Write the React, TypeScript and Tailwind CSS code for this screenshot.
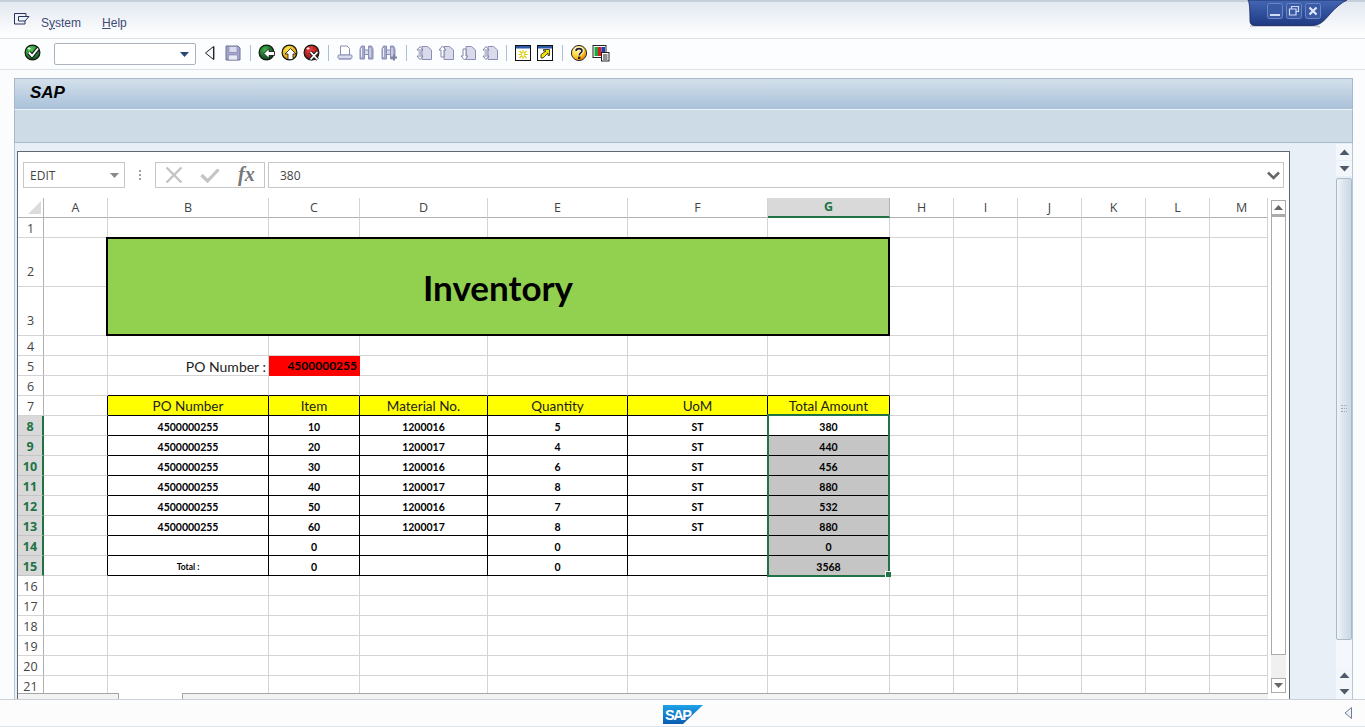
import React from "react";

const OUT = "#8a8fb5";
const FILL = "#d9dbeb";

function Ball({ id, c1, c2, children }: { id: string; c1: string; c2: string; children: React.ReactNode }) {
  return (
    <svg width="18" height="18" viewBox="0 0 18 18">
      <defs>
        <radialGradient id={id} cx="40%" cy="30%" r="75%">
          <stop offset="0" stopColor={c1} />
          <stop offset="1" stopColor={c2} />
        </radialGradient>
      </defs>
      <circle cx="8.5" cy="8.5" r="7.4" fill={`url(#${id})`} stroke="#101a10" strokeWidth="1.2" />
      {children}
    </svg>
  );
}

const CheckIcon = () => (
  <Ball id="g1" c1="#58c858" c2="#0c5a20">
    <path d="M5 8.5 L8 12 L14 4.5" fill="none" stroke="#111" strokeWidth="4" />
    <path d="M5 8.5 L8 12 L14 4.5" fill="none" stroke="#fff" strokeWidth="2" />
    <path d="M5 3 V6 M3.5 4.5 H6.5" stroke="#d8f5d8" strokeWidth="1" />
  </Ball>
);
const BackIcon = () => (
  <Ball id="g2" c1="#3fb04a" c2="#063d18">
    <path d="M6 9.5 L11 4.5 V7.5 H16.5 V11.5 H11 V14.5 Z" fill="#fff" stroke="#111" strokeWidth="0.8" />
  </Ball>
);
const UpIcon = () => (
  <Ball id="g3" c1="#ffe84a" c2="#d98a00">
    <path d="M9.5 4.5 L15 10 H12 V15.5 H7 V10 H4 Z" fill="#fff" stroke="#111" strokeWidth="0.8" />
  </Ball>
);
const CancelIcon = () => (
  <Ball id="g4" c1="#f04040" c2="#7c0c0c">
    <path d="M7.5 8 L14.5 15.5 M14.5 8 L7.5 15.5" stroke="#222" strokeWidth="3.6" />
    <path d="M7.5 8 L14.5 15.5 M14.5 8 L7.5 15.5" stroke="#fff" strokeWidth="1.8" />
    <path d="M5 3 V6 M3.5 4.5 H6.5" stroke="#ffe0e0" strokeWidth="1" />
  </Ball>
);
const PrevIcon = () => (
  <svg width="12" height="16" viewBox="0 0 12 16">
    <path d="M9.5 1.5 V14.5 L1.5 8 Z" fill="#f4f6f9" stroke="#222" strokeWidth="1" />
    <path d="M10.5 1.5 V14.5" stroke="#9aa5b5" strokeWidth="1" />
  </svg>
);
const SaveIcon = () => (
  <svg width="16" height="16" viewBox="0 0 16 16">
    <path d="M1 1 H13 L15 3 V15 H1 Z" fill="#a3a5cb" stroke="#6e7199" />
    <rect x="4" y="1.5" width="8" height="6" fill="#d9dbeb" stroke="#7c7fa8" strokeWidth="0.6" />
    <rect x="3.5" y="10" width="9" height="5" fill="#e8e9f2" stroke="#7c7fa8" strokeWidth="0.6" />
  </svg>
);
const PrintIcon = () => (
  <svg width="16" height="16" viewBox="0 0 16 16">
    <path d="M3.5 1 H10 L12.5 3.5 V10 H3.5 Z" fill="#fff" stroke={OUT} />
    <rect x="1" y="10" width="14" height="3.5" rx="1" fill={FILL} stroke={OUT} />
    <rect x="2" y="13.5" width="12" height="1.5" fill="#aeb1cf" />
  </svg>
);
const FindIcon = ({ plus }: { plus?: boolean }) => (
  <svg width="17" height="16" viewBox="0 0 17 16">
    <path d="M1 14 V4 L2.5 1 H5.5 V14 Z M9.5 14 V1 H12.5 L14 4 V14 Z" fill="#a4a6cc" stroke={OUT} />
    <rect x="5.5" y="5" width="4" height="4.5" fill={FILL} stroke={OUT} />
    <path d="M2.5 3 V12 M11 3 V12" stroke="#eceef6" strokeWidth="1" />
    {plus && <path d="M13 9.5 V15.5 M10 12.5 H16" stroke="#80839f" strokeWidth="2" />}
  </svg>
);
const Page = () => <path d="M6 1.5 H11.5 L15.5 5 V14.5 H6 Z" fill={FILL} stroke={OUT} />;
const FirstIcon = () => (
  <svg width="17" height="16" viewBox="0 0 17 16">
    <Page />
    <path d="M1 5 L4 1.5 L7 5 H1 M1 11 L4 14.5 L7 11 H1" fill="#fff" stroke="#777b9e" strokeWidth="0.9" />
    <path d="M2.5 7 H5.5 M2.5 9 H5.5" stroke="#777b9e" />
  </svg>
);
const PrevPageIcon = () => (
  <svg width="17" height="16" viewBox="0 0 17 16">
    <Page />
    <path d="M1 5 L4.5 1 L8 5 H6 V12 H3 V5 Z" fill="#fff" stroke="#777b9e" strokeWidth="0.9" />
  </svg>
);
const NextPageIcon = () => (
  <svg width="17" height="16" viewBox="0 0 17 16">
    <Page />
    <path d="M1 11 L4.5 15 L8 11 H6 V4 H3 V11 Z" fill="#fff" stroke="#777b9e" strokeWidth="0.9" />
  </svg>
);
const WinNew = () => (
  <svg width="16" height="16" viewBox="0 0 16 16">
    <rect x="0.5" y="0.5" width="15" height="15" fill="#fff" stroke="#111" />
    <rect x="1" y="1" width="14" height="2.5" fill="#2b5aa8" />
    <path d="M8 5 V14 M3.5 9.5 H12.5 M4.5 6 L11.5 13 M11.5 6 L4.5 13" stroke="#d8c800" strokeWidth="1.1" />
    <rect x="6.8" y="8.3" width="2.4" height="2.4" fill="#fff" />
  </svg>
);
const WinJump = () => (
  <svg width="16" height="16" viewBox="0 0 16 16">
    <rect x="0.5" y="0.5" width="15" height="15" fill="#fff" stroke="#111" />
    <rect x="1" y="1" width="14" height="2.5" fill="#2b5aa8" />
    <path d="M4 13 V9.5 L9 6 H6.5 V4.5 H12.5 V10.5 H11 V8 L6 13 Z" fill="#f4e400" stroke="#222" strokeWidth="0.8" />
  </svg>
);
const HelpIcon = () => (
  <svg width="18" height="18" viewBox="0 0 18 18">
    <defs>
      <radialGradient id="g5" cx="35%" cy="30%" r="80%">
        <stop offset="0" stopColor="#fff7a0" />
        <stop offset="0.6" stopColor="#ffc81e" />
        <stop offset="1" stopColor="#e0640a" />
      </radialGradient>
    </defs>
    <circle cx="9" cy="9" r="7.6" fill="url(#g5)" stroke="#2a2a3a" />
    <path d="M6 7 C6 3.8 12 3.8 12 7 C12 9 9.2 9 9.2 11.4" fill="none" stroke="#fff" strokeWidth="3.4" />
    <path d="M6 7 C6 3.8 12 3.8 12 7 C12 9 9.2 9 9.2 11.4" fill="none" stroke="#222" strokeWidth="1.6" />
    <rect x="8" y="12.6" width="2.4" height="2.4" fill="#222" />
  </svg>
);
const LayoutIcon = () => (
  <svg width="18" height="18" viewBox="0 0 18 18">
    <rect x="1" y="1.5" width="13" height="12" fill="#fff" stroke="#222" />
    <rect x="2.5" y="3" width="3.5" height="9" fill="#1fa83c" />
    <rect x="6" y="3" width="3.5" height="9" fill="#d81e1e" />
    <rect x="9.5" y="3" width="3.5" height="6" fill="#1e3eb8" />
    <rect x="9.5" y="8.5" width="7.5" height="8.5" fill="#fff" stroke="#222" />
    <path d="M11 11 H15.5 M11 13 H15.5 M11 15 H15.5" stroke="#222" />
  </svg>
);

const Slot = ({ children, className = "" }: { children: React.ReactNode; className?: string }) => (
  <div className={`w-[22px] h-[22px] flex items-center justify-center shrink-0 ${className}`}>{children}</div>
);
const Sep = ({ className = "w-[12px]" }: { className?: string }) => (
  <div className={`h-[16px] flex justify-center shrink-0 ${className}`}>
    <div className="w-px h-full bg-[#a9c1d6]" />
  </div>
);

function Triangle({ dir }: { dir: "up" | "down" }) {
  return (
    <svg width="11" height="7" viewBox="0 0 11 7">
      <path d={dir === "up" ? "M5.5 0.5 L10.5 6 H0.5 Z" : "M0.5 1 H10.5 L5.5 6.5 Z"} fill="#4d5a6b" />
    </svg>
  );
}

const COLS = ["A", "B", "C", "D", "E", "F", "G", "H", "I", "J", "K", "L", "M"];
const TABLE_HEAD = ["PO Number", "Item", "Material No.", "Quantity", "UoM", "Total Amount"];
const TABLE_ROWS: Record<number, string[]> = {
  8: ["4500000255", "10", "1200016", "5", "ST", "380"],
  9: ["4500000255", "20", "1200017", "4", "ST", "440"],
  10: ["4500000255", "30", "1200016", "6", "ST", "456"],
  11: ["4500000255", "40", "1200017", "8", "ST", "880"],
  12: ["4500000255", "50", "1200016", "7", "ST", "532"],
  13: ["4500000255", "60", "1200017", "8", "ST", "880"],
  14: ["", "0", "", "0", "", "0"],
  15: ["Total :", "0", "", "0", "", "3568"],
};
const ROW_NUMS = Array.from({ length: 21 }, (_, i) => i + 1);

function Cell({ r, c }: { r: number; c: number }) {
  const inTable = r >= 7 && r <= 15 && c >= 1 && c <= 6;
  const red = r === 5 && c === 2;
  const right = red ? "border-r-[#ff0000]" : inTable || (c === 0 && r >= 7 && r <= 15) ? "border-r-black" : "border-r-[#d4d4d4]";
  const bottom = red ? "border-b-[#ff0000]" : inTable || (r === 6 && c >= 1 && c <= 6) ? "border-b-black" : "border-b-[#d4d4d4]";
  let content: React.ReactNode = null;
  let extra = "";
  if (r === 5 && c === 1) {
    content = "PO Number :";
    extra = "justify-end pr-[2px] pt-px text-[14px] text-[#222]";
  } else if (red) {
    content = "4500000255";
    extra = "justify-end pr-[2px] pt-px text-[12px] font-bold text-black bg-[#ff0000]";
  } else if (r === 7 && inTable) {
    content = TABLE_HEAD[c - 1];
    extra = "justify-center pt-[2px] bg-[#ffff00] text-[13.5px] text-[#222]";
  } else if (r >= 8 && inTable) {
    content = TABLE_ROWS[r][c - 1];
    const small = r === 15 && c === 1;
    extra = `justify-center pt-[4px] font-bold text-black ${small ? "text-[8.5px]" : "text-[10.5px]"} ${c === 6 && r >= 9 ? "bg-[#c5c5c5]" : ""}`;
  }
  const selected = r === 8 && c === 6;
  return (
    <div className={`flex items-center whitespace-nowrap border-r border-b ${right} ${bottom} ${extra} ${selected ? "relative z-20" : ""}`}>
      {content}
      {selected && (
        <div className="absolute -left-px -top-[2px] w-[123px] h-[163px] border-2 border-[#217346] pointer-events-none">
          <div className="absolute -right-[3px] -bottom-[2px] w-[6px] h-[6px] bg-[#217346] border-l border-t border-white" />
        </div>
      )}
    </div>
  );
}

export default function App() {
  return (
    <div className="w-[1365px] h-[727px] overflow-hidden relative flex flex-col bg-[#fbfcfd] font-['Liberation_Sans',sans-serif]">
      {/* menu bar */}
      <div className="h-[39px] shrink-0 flex items-center pl-[14px] pt-[5px] border-t-2 border-t-[#c6cedb] border-b border-b-[#dde2e8] bg-gradient-to-b from-[#e3e9f1] to-[#ffffff] text-[12px] text-[#3f4a78]">
        <svg width="16" height="12" viewBox="0 0 16 12" className="-mt-[7px]">
          <path d="M0.5 0.5 H12 V3 M0.5 0.5 V11 H11 V8 M4.5 3.5 H15 L11 8 H4.5 Z" fill="none" stroke="#24345f" strokeWidth="1" />
        </svg>
        <span className="ml-[11px]">S<span className="underline">y</span>stem</span>
        <span className="ml-[21px]"><span className="underline">H</span>elp</span>
      </div>

      {/* toolbar */}
      <div className="h-[31px] shrink-0 flex items-center pl-[22px] pb-[2px] border-b border-b-[#dde2e8] bg-[#fcfdfe]">
        <Slot><CheckIcon /></Slot>
        <div className="ml-[10px] mt-[2px] w-[142px] h-[22px] shrink-0 flex items-center justify-end pr-[6px] bg-white border border-[#a9b2bd] rounded-[2px]">
          <svg width="9" height="5" viewBox="0 0 9 5"><path d="M0 0 H9 L4.5 5 Z" fill="#2c4478" /></svg>
        </div>
        <Slot className="ml-[3px]"><PrevIcon /></Slot>
        <Slot className="ml-px"><SaveIcon /></Slot>
        <Sep />
        <Slot><BackIcon /></Slot>
        <Slot className="ml-px"><UpIcon /></Slot>
        <Slot><CancelIcon /></Slot>
        <Sep className="w-[10px]" />
        <Slot className="ml-px"><PrintIcon /></Slot>
        <Slot><FindIcon /></Slot>
        <Slot><FindIcon plus /></Slot>
        <Sep />
        <Slot className="ml-px"><FirstIcon /></Slot>
        <Slot><PrevPageIcon /></Slot>
        <Slot><NextPageIcon /></Slot>
        <Slot><FirstIcon /></Slot>
        <Sep className="w-[10px]" />
        <Slot className="ml-px"><WinNew /></Slot>
        <Slot><WinJump /></Slot>
        <Sep />
        <Slot><HelpIcon /></Slot>
        <Slot><LayoutIcon /></Slot>
      </div>

      {/* main */}
      <div className="flex-1 min-h-0 flex flex-col pt-[8px] pl-[14px] pr-[12px]">
        <div className="h-[31px] shrink-0 flex items-center pl-[15px] pb-[3px] border-l border-t border-r border-[#a6b8c9] bg-gradient-to-b from-[#d3e0eb] to-[#a9c1d9]">
          <span className="text-[17px] font-bold italic text-black">SAP</span>
        </div>
        <div className="h-[34px] shrink-0 bg-[#cddbe7] border-t border-t-[#eef3f7] border-l border-l-[#a6b8c9] border-r border-r-[#a6b8c9] border-b border-b-[#a9b9c9]" />
        <div className="flex-1 min-h-0 flex bg-[#e8eff7] border-l border-l-[#b7c5d4] border-r border-r-[#b7c5d4]">
          {/* sheet */}
          <div className="ml-[2px] mt-[8px] w-[1273px] shrink-0 flex flex-col bg-white border-l border-t border-r border-[#5f6975]">
            {/* formula bar */}
            <div className="h-[26px] mt-[10px] mb-[10px] pl-[5px] pr-[5px] flex items-stretch shrink-0 font-['Open_Sans',sans-serif]">
              <div className="w-[102px] border border-[#c6c6c6] flex items-center justify-between pl-[6px] pr-[5px] pt-px text-[12px] text-[#444]">
                <span>EDIT</span>
                <svg width="9" height="5" viewBox="0 0 9 5"><path d="M0 0 H9 L4.5 5 Z" fill="#8a8a8a" /></svg>
              </div>
              <div className="w-[30px] flex flex-col items-center justify-center gap-[2px]">
                <div className="w-[2px] h-[2px] bg-[#a0a0a0]" />
                <div className="w-[2px] h-[2px] bg-[#a0a0a0]" />
                <div className="w-[2px] h-[2px] bg-[#a0a0a0]" />
              </div>
              <div className="w-[110px] border border-[#c6c6c6] flex items-center pl-[9px]">
                <svg width="18" height="16" viewBox="0 0 18 16">
                  <path d="M1.5 0.5 L16.5 15.5 M16.5 0.5 L1.5 15.5" stroke="#c4c4c4" strokeWidth="2.4" />
                </svg>
                <svg width="20" height="16" viewBox="0 0 20 16" className="ml-[17px]">
                  <path d="M1.5 8 L7.5 14 L18.5 2.5" fill="none" stroke="#c4c4c4" strokeWidth="3.2" />
                </svg>
                <span className="ml-[18px] font-['Liberation_Serif',serif] italic font-bold text-[20px] leading-none text-[#777] -mt-[2px]">fx</span>
              </div>
              <div className="ml-[3px] flex-1 border border-[#c6c6c6] flex items-center justify-between pl-[11px] pr-[3px] pt-px text-[12px] text-[#444]">
                <span>380</span>
                <svg width="13" height="9" viewBox="0 0 13 9"><path d="M1 1.5 L6.5 7 L12 1.5" fill="none" stroke="#666" strokeWidth="2.6" /></svg>
              </div>
            </div>

            {/* grid + vertical scrollbar */}
            <div className="h-[495px] shrink-0 flex overflow-hidden">
              <div className="w-[1250px] shrink-0 overflow-hidden">
                <div className="grid grid-cols-[26px_64px_161px_91px_128px_140px_140px_122px_64px_64px_64px_64px_64px_58px] grid-rows-[20px_20px_49px_49px_repeat(18,20px)] font-['Lato',sans-serif]">
                  {/* corner */}
                  <div className="flex items-end justify-end pr-[2px] pb-[3px] border-r border-b border-r-[#b1b1b1] border-b-[#b1b1b1]">
                    <svg width="13" height="13" viewBox="0 0 13 13"><path d="M13 0 V13 H0 Z" fill="#dcdcdc" /></svg>
                  </div>
                  {COLS.map((c) =>
                    c === "G" ? (
                      <div key={c} className="flex items-center justify-center pt-px bg-[#d9d9d9] border-b-2 border-b-[#217346] border-r border-r-[#b1b1b1] font-['Open_Sans',sans-serif] text-[12.5px] font-bold text-[#217346]">{c}</div>
                    ) : (
                      <div key={c} className={`flex items-center justify-center pt-px border-b border-b-[#b1b1b1] border-r border-r-[#d4d4d4] font-['Open_Sans',sans-serif] text-[12.5px] text-[#444] ${c === "M" ? "pl-[6px]" : ""}`}>{c}</div>
                    )
                  )}
                  {ROW_NUMS.map((r) => (
                    <React.Fragment key={r}>
                      {r >= 8 && r <= 15 ? (
                        <div className="flex items-center justify-center pt-[3px] bg-[#d9d9d9] border-r-2 border-r-[#217346] border-b border-b-[#c4c4c4] font-['Open_Sans',sans-serif] text-[12.5px] font-bold text-[#217346]">{r}</div>
                      ) : (
                        <div className={`flex justify-center border-r border-r-[#b1b1b1] border-b border-b-[#d4d4d4] font-['Open_Sans',sans-serif] text-[12.5px] text-[#444] ${r === 2 || r === 3 ? "items-end pb-[4px]" : "items-center pt-[3px]"}`}>{r}</div>
                      )}
                      {COLS.map((_, c) => {
                        if ((r === 2 || r === 3) && c >= 1 && c <= 6) {
                          if (r === 2 && c === 1)
                            return (
                              <div key={c} className="col-span-6 row-span-2 z-10 -ml-[2px] -mt-px flex items-center justify-center bg-[#92d050] border-2 border-black text-[35px] font-bold text-black pt-px">
                                Inventory
                              </div>
                            );
                          return null;
                        }
                        return <Cell key={c} r={r} c={c} />;
                      })}
                    </React.Fragment>
                  ))}
                </div>
              </div>
              {/* sheet vertical scrollbar */}
              <div className="w-[21px] shrink-0 pt-[2px] pl-[3px] pr-[3px] flex flex-col">
                <div className="h-[15px] shrink-0 border border-[#ababab] flex items-center justify-center bg-white">
                  <svg width="9" height="5" viewBox="0 0 9 5"><path d="M4.5 0 L9 5 H0 Z" fill="#666" /></svg>
                </div>
                <div className="h-[440px] shrink-0 border border-[#ababab] border-t-2 bg-white" />
                <div className="flex-1 bg-[#f0f0f0]" />
                <div className="h-[15px] shrink-0 border border-[#ababab] flex items-center justify-center bg-white">
                  <svg width="9" height="5" viewBox="0 0 9 5"><path d="M0 0 H9 L4.5 5 Z" fill="#666" /></svg>
                </div>
              </div>
            </div>

            {/* sheet tabs strip */}
            <div className="flex-1 flex">
              <div className="w-[101px] bg-[#f2f2f2] border-t border-r border-[#a6a6a6]" />
              <div className="w-[63px]" />
              <div className="w-[1086px] bg-[#f2f2f2] border-t border-l border-[#a6a6a6]" />
            </div>
          </div>

          {/* outer vertical scrollbar */}
          <div className="ml-auto w-[16px] shrink-0 flex flex-col pt-px">
            <div className="h-[16px] shrink-0 bg-[#f3f6fa] flex items-center justify-center"><Triangle dir="up" /></div>
            <div className="h-[15px] mt-px shrink-0 bg-[#f3f6fa] flex items-center justify-center"><Triangle dir="down" /></div>
            <div className="h-[462px] mt-[2px] shrink-0 border border-[#aab8c8] rounded-[2px] bg-gradient-to-r from-[#f0f4f8] via-[#d9e4ee] to-[#cbd9e6] flex flex-col items-center justify-center gap-px">
              <div className="w-[6px] h-[2px] border-t border-dotted border-[#9aa8b8]" />
              <div className="w-[6px] h-[2px] border-t border-dotted border-[#9aa8b8]" />
              <div className="w-[6px] h-[2px] border-t border-dotted border-[#9aa8b8]" />
            </div>
            <div className="flex-1 bg-[#f4f7fb]" />
            <div className="h-[16px] shrink-0 bg-[#f3f6fa] flex items-center justify-center"><Triangle dir="up" /></div>
            <div className="h-[16px] shrink-0 bg-[#f3f6fa] flex items-center justify-center"><Triangle dir="down" /></div>
          </div>
        </div>
      </div>

      {/* status bar */}
      <div className="h-[28px] shrink-0 flex items-center justify-center relative border-t border-t-[#c9d0d8] border-b border-b-[#dfe3e8] bg-[#fcfcfc]">
        <svg width="40" height="19" viewBox="0 0 40 19" className="mt-[2px] ml-[1px]">
          <defs>
            <linearGradient id="sapg" x1="0" y1="0" x2="0" y2="1">
              <stop offset="0" stopColor="#1ea3e8" />
              <stop offset="1" stopColor="#0a5cb0" />
            </linearGradient>
          </defs>
          <path d="M0 0 H40 L20 19 H0 Z" fill="url(#sapg)" />
          <text x="2" y="15" fontFamily="Liberation Sans, sans-serif" fontWeight="700" fontSize="14.5" fill="#fff" textLength="27">SAP</text>
        </svg>
        <div className="absolute right-[12px] top-[7px]">
          <svg width="9" height="12" viewBox="0 0 9 12"><path d="M7.5 0.5 V11.5 L1 6 Z" fill="#eef2f6" stroke="#6d7f90" /></svg>
        </div>
      </div>

      {/* window controls */}
      <div className="absolute top-0 left-[1246px]">
        <svg width="106" height="30" viewBox="0 0 106 30">
          <defs>
            <linearGradient id="wing" x1="0" y1="0" x2="0" y2="1">
              <stop offset="0" stopColor="#4466b4" />
              <stop offset="1" stopColor="#1f3a82" />
            </linearGradient>
          </defs>
          <path d="M4 26 H70 L74 27" fill="none" stroke="#9aa4b4" strokeWidth="1.5" opacity="0.6" />
          <path d="M2 0 C4 2 4 18 4 21 C4 24 6 25.5 9 25.5 H66 C74 25.5 78 21 84 14 C89 8 95 3 101 0 Z" fill="url(#wing)" stroke="#16265c" strokeWidth="0.8" />
          <g fill="#3b5aa6" stroke="#6a86c4" strokeWidth="1">
            <rect x="21.5" y="3.5" width="15" height="15" rx="2" />
            <rect x="40.5" y="3.5" width="15" height="15" rx="2" />
            <rect x="59.5" y="3.5" width="15" height="15" rx="2" />
          </g>
          <rect x="24" y="14" width="10" height="2" fill="#cfdcf3" />
          <path d="M45.5 8.5 V6.5 H52.5 V11.5 H50 M43.5 9 H50 V15 H43.5 Z" fill="none" stroke="#cfdcf3" strokeWidth="1.2" />
          <path d="M63.5 7.5 L70.5 14.5 M70.5 7.5 L63.5 14.5" stroke="#dfe8f8" strokeWidth="2.2" />
        </svg>
      </div>
    </div>
  );
}
